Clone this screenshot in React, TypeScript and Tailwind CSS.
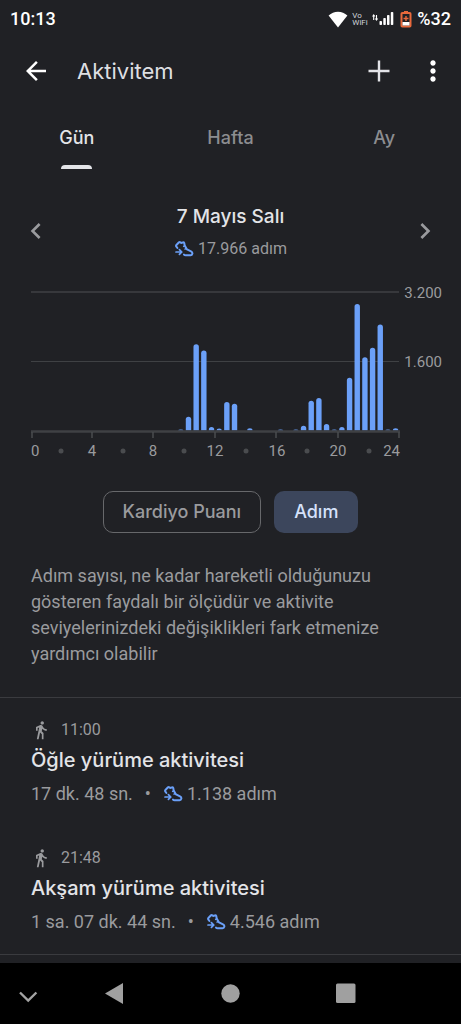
import React, { useState } from 'react';
import { MdArrowBack, MdChevronLeft, MdChevronRight, MdDirectionsWalk, MdMoreVert } from 'react-icons/md';

const TABS = ['Gün', 'Hafta', 'Ay'];

// Half-hour slots of the day that have steps
const STEPS: Record<number, number> = {
  19: 20, 20: 320, 21: 1990, 22: 1850, 23: 80, 24: 45, 25: 660, 26: 620, 28: 50,
  32: 20, 34: 25, 35: 110, 36: 690, 37: 750, 38: 150, 39: 20, 40: 80, 41: 1220,
  42: 2920, 43: 1690, 44: 1910, 45: 2450, 46: 25, 47: 50,
};

const ACTIVITIES = [
  { time: '11:00', title: 'Öğle yürüme aktivitesi', duration: '17 dk. 48 sn.', steps: '1.138 adım' },
  { time: '21:48', title: 'Akşam yürüme aktivitesi', duration: '1 sa. 07 dk. 44 sn.', steps: '4.546 adım' },
];

const ShoeIcon: React.FC = () => (
  <svg viewBox="0 0 20 18" className="h-[18px] w-5 shrink-0" fill="none" stroke="#6ba0f8" strokeWidth="2" strokeLinejoin="round" strokeLinecap="round" aria-hidden="true">
    <path d="M3.400 8 2.200 6.400Q1.800 5.700 2.400 5L5 2.300Q5.700 1.700 6.400 2.400 7.400 3.200 8.300 2.600 9.800 2 10.300 3.200L10.700 5.600 13 9.400 17 11.400Q18.600 12.200 18.400 13.600 18 15.300 16.600 15.300H11.600Q10.600 15.300 10 14.600" />
    <path d="M10.700 5.800 9.600 6.400M12.200 8.400 11 9.200" strokeWidth="1.400" />
    <path d="M2 12h5.800M5.400 9.600 7.800 12l-2.400 2.400" strokeWidth="1.700" />
  </svg>
);

const StatusBar: React.FC = () => (
  <div className="flex h-[38px] items-center justify-between px-[10px] font-medium text-white">
    <span className="text-lg">10:13</span>
    <div className="flex items-center">
      <svg viewBox="0 0 20 17" className="mr-1 h-[17px] w-5" fill="#fff" aria-hidden="true">
        <path d="M10 16.5.6 4.6C3.3 1.900 6.400.7 10 .7s6.700 1.200 9.400 3.900z" />
      </svg>
      <div className="mr-1 w-4 text-[8px] font-normal leading-[7px] text-gray-300">
        <div>Vo</div>
        <div>WiFi</div>
      </div>
      <svg viewBox="0 0 22 16" className="mr-[6px] h-4 w-[22px]" fill="#fff" aria-hidden="true">
        <path d="M1.700 4v5M4.500 4v5" stroke="#fff" strokeWidth="1.100" />
        <path d="M0 5.500 1.700 3l1.700 2.500zM2.800 7.500h3.400L4.500 10z" />
        <rect x="7.500" y="10" width="2.500" height="4" rx=".8" />
        <rect x="11.300" y="7" width="2.500" height="7" rx=".8" />
        <rect x="15" y="4" width="2.500" height="10" rx=".8" />
        <rect x="18.800" y="1" width="2.500" height="13" rx=".8" />
      </svg>
      <svg viewBox="0 0 12 18" className="mr-[5px] h-[18px] w-3" fill="none" aria-hidden="true">
        <path d="M4 1h4v2H4z" fill="#e8693c" />
        <rect x="1.500" y="3" width="9" height="13.500" rx=".8" stroke="#e8693c" strokeWidth="2" />
        <path d="M2.500 12h7v3.500h-7z" fill="#fff" />
        <path d="M6 6v5M3.500 8.500h5" stroke="#e8693c" strokeWidth="1.400" />
      </svg>
      <span className="text-lg">%32</span>
    </div>
  </div>
);

const Chart: React.FC = () => (
  <svg viewBox="0 0 461 190" className="block w-full" role="img" aria-label="Saatlik adım grafiği">
    <path d="M31 20h368" stroke="#3f4144" strokeWidth="1.500" />
    <path d="M31 89.500h368" stroke="#3f4144" />
    {Object.entries(STEPS).map(([slot, value]) => {
      const height = Math.max((value / 3200) * 138.5, 1);
      const x = 32.4 + Number(slot) * 7.67;
      const r = Math.min(2.7, height);
      return (
        <path key={slot} d={`M${x} 158.5v${r - height}q0 ${-r} 2.7 ${-r}t2.7 ${r}v${height - r}z`} fill="#6ba0f8" />
      );
    })}
    <path d="M31 159.500h369" stroke="#3f4144" strokeWidth="2.500" />
    {[32, 92, 153, 215, 276, 338, 399].map((x) => (
      <path key={x} d={`M${x} 160v6`} stroke="#4a4c4f" strokeWidth="1.5" />
    ))}
    {[61, 123, 184, 246, 307, 369].map((x) => (
      <circle key={x} cx={x} cy="179" r="2.5" fill="#4a4c4f" />
    ))}
    <g className="fill-[#9a9b9e] text-[15px]">
      <text x="31" y="184">0</text>
      <text x="92" y="184" textAnchor="middle">4</text>
      <text x="153" y="184" textAnchor="middle">8</text>
      <text x="215" y="184" textAnchor="middle">12</text>
      <text x="277" y="184" textAnchor="middle">16</text>
      <text x="338" y="184" textAnchor="middle">20</text>
      <text x="400" y="184" textAnchor="end">24</text>
      <text x="442" y="26" textAnchor="end">3.200</text>
      <text x="442" y="95" textAnchor="end">1.600</text>
    </g>
  </svg>
);

const App: React.FC = () => {
  const [tab, setTab] = useState('Gün');

  return (
    <div className="flex min-h-screen flex-col bg-[#202125] font-['Roboto',sans-serif] text-[#9a9b9e]">
      <StatusBar />

      <header className="flex h-[66px] items-center pl-[21px] pr-3 text-white">
        <button type="button" aria-label="Geri">
          <MdArrowBack className="size-[30px]" />
        </button>
        <h1 className="ml-[26px] flex-1 font-['Inter',sans-serif] text-[22px] text-[#dedfe2]">Aktivitem</h1>
        <button type="button" aria-label="Ekle" className="mr-[26px]">
          <svg viewBox="0 0 24 24" className="size-6" stroke="#e3e4e8" strokeWidth="2.4" aria-hidden="true">
            <path d="M12 1.500v21M1.500 12h21" />
          </svg>
        </button>
        <button type="button" aria-label="Diğer seçenekler">
          <MdMoreVert className="size-8" />
        </button>
      </header>

      <nav className="grid h-[65px] grid-cols-3 font-['Inter',sans-serif] text-lg font-medium">
        {TABS.map((name) => (
          <button
            key={name}
            type="button"
            onClick={() => setTab(name)}
            className={`flex flex-col items-center justify-between pt-5 ${tab === name ? 'text-[#e3e4e8]' : 'text-[#8c8d90]'}`}
          >
            <span>{name}</span>
            <span className={`h-1 w-[31px] rounded-t-full ${tab === name ? 'bg-[#e3e4e8]' : ''}`} />
          </button>
        ))}
      </nav>

      <main className="flex-1">
        <div className="flex items-center justify-between px-5 pt-8">
          <button type="button" aria-label="Önceki gün">
            <MdChevronLeft className="size-8" />
          </button>
          <div className="flex flex-col items-center gap-1">
            <h2 className="font-['Inter',sans-serif] text-[19px] font-medium leading-8 text-[#e3e4e8]">7 Mayıs Salı</h2>
            <p className="flex items-center gap-1 text-base leading-6">
              <ShoeIcon />
              17.966 adım
            </p>
          </div>
          <button type="button" aria-label="Sonraki gün">
            <MdChevronRight className="size-8" />
          </button>
        </div>

        <div className="pt-[11px]">
          <Chart />
        </div>

        <div className="flex justify-center gap-[13px] pt-[29px] font-['Inter',sans-serif] text-lg font-medium">
          <button type="button" className="h-[42px] rounded-[10px] border border-[#67686b] px-[19px]">Kardiyo Puanı</button>
          <button type="button" className="h-[42px] rounded-[10px] bg-[#3c465c] px-5 text-[#d6e2fb]">Adım</button>
        </div>

        <p className="px-[31px] pt-[30px] text-lg leading-[26px]">
          Adım sayısı, ne kadar hareketli olduğunuzu gösteren faydalı bir ölçüdür ve aktivite seviyelerinizdeki değişiklikleri fark etmenize yardımcı olabilir
        </p>

        <ul className="mt-[30px] border-y border-[#3a3b3f]">
          {ACTIVITIES.map((activity) => (
            <li key={activity.time} className="h-32 px-[31px] pt-5">
              <div className="flex items-center gap-[10px] text-base">
                <MdDirectionsWalk className="size-5" />
                {activity.time}
              </div>
              <h3 className="font-['Inter',sans-serif] text-xl font-medium leading-9 text-[#e3e4e8]">{activity.title}</h3>
              <p className="flex items-center text-lg leading-8">
                {activity.duration}
                <span className="mx-3">•</span>
                <ShoeIcon />
                <span className="ml-1">{activity.steps}</span>
              </p>
            </li>
          ))}
        </ul>
      </main>

      <footer className="mt-2 h-[61px] bg-black">
        <svg viewBox="0 0 461 61" className="block w-full" aria-hidden="true">
          <path d="M20 29.500 28.200 37.500 36.400 29.500" fill="none" stroke="#a3a3a3" strokeWidth="2.400" />
          <path d="M105 30.500 123 20v21z" fill="#a0a0a0" />
          <circle cx="230.500" cy="30.500" r="9.200" fill="#a0a0a0" />
          <rect x="336" y="20.500" width="19.500" height="19.500" rx="1.500" fill="#a0a0a0" />
        </svg>
      </footer>
    </div>
  );
};

export default App;
